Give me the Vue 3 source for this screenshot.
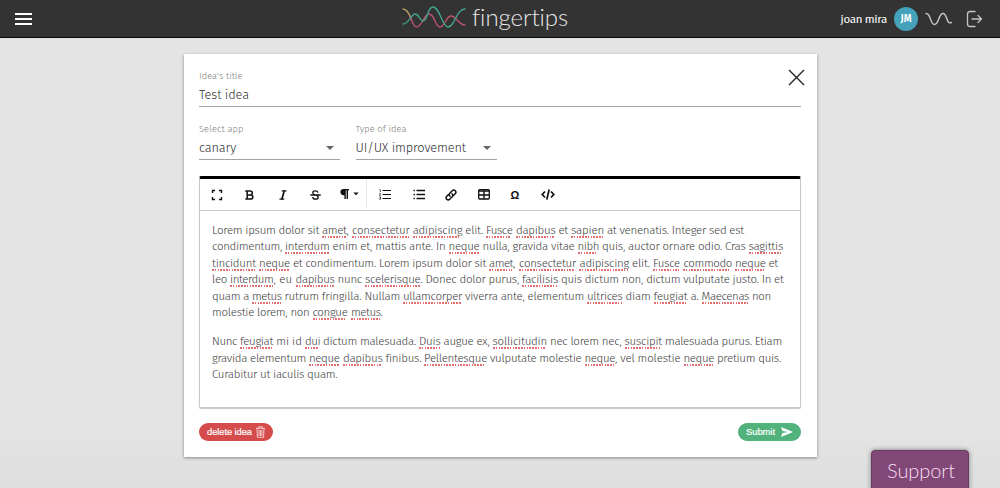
<script setup>
// Sets letter spacing so that a label fills the given width.
const fit = (el, { value }) => {
  el.style.letterSpacing = '0px'
  const range = document.createRange()
  range.selectNodeContents(el)
  const natural = range.getBoundingClientRect().width
  el.style.letterSpacing = (value - natural) / el.textContent.length + 'px'
}
const vFit = { mounted: fit }

// Segments alternate between plain text and words flagged by the spell checker.
const line = (text, stops) =>
  text
    .split('|')
    .map((t, i) => ({ text: t, flagged: i % 2 === 1, width: stops[i + 1] - stops[i] }))
    .filter((s) => s.text)

const paragraphs = [
  [
    line('Lorem ipsum dolor sit |amet|, |consectetur| |adipiscing| elit. |Fusce| |dapibus| et |sapien| at venenatis. Integer sed est',
      [212, 322, 346.5, 352, 409.5, 412.7, 462.3, 486, 512.5, 516, 555.5, 571, 604, 744]),
    line('condimentum, |interdum| enim et, mattis ante. In |neque| nulla, gravida vitae |nibh| quis, auctor ornare odio. Cras |sagittis',
      [212, 285, 329.5, 448.5, 479.5, 577.5, 599, 748.5, 783]),
    line('|tincidunt| |neque| et condimentum. Lorem ipsum dolor sit |amet|, |consectetur| |adipiscing| elit. |Fusce| |commodo| |neque| et',
      [212, 212, 255.8, 259, 290, 489, 513, 519, 576, 579.5, 629, 653, 680, 683.5, 732, 735, 765.5, 778]),
    line('leo |interdum|, eu |dapibus| nunc |scelerisque|. Donec dolor purus, |facilisis| quis dictum non, dictum vulputate justo. In et',
      [212, 230, 273.5, 295.5, 334.5, 365, 420.5, 522, 558, 783.7]),
    line('quam a |metus| rutrum fringilla. Nullam |ullamcorper| viverra ante, elementum |ultrices| diam |feugiat| a. |Maecenas| non',
      [212, 252, 281.5, 403, 462, 587, 622.5, 653.5, 687.5, 701.5, 749, 771]),
    line('molestie lorem, non |congue| |metus|.', [212, 312.5, 347.5, 351, 380.5, 383.5])
  ],
  [
    line('Nunc |feugiat| mi id |dui| dictum malesuada. |Duis| augue ex, |sollicitudin| nec lorem nec, |suscipit| malesuada purus. Etiam',
      [212, 240, 273, 305, 320, 419, 440.5, 492.5, 547, 624.5, 662, 782]),
    line('gravida elementum |neque| |dapibus| finibus. |Pellentesque| vulputate molestie |neque|, vel molestie |neque| pretium quis.',
      [212, 309, 339.5, 343, 382.5, 424, 487, 584.5, 615, 683.5, 714, 781]),
    line('Curabitur ut iaculis quam.', [212, 337.500])
  ]
]
</script>

<template>
  <div class="page">
    <header>
      <div class="menu"><i></i><i></i><i></i></div>
      <div class="brand">
        <svg width="64" height="24" viewBox="0 0 64 24" fill="none" stroke-width="1.3" stroke-linecap="round">
          <path stroke="#b9a25c" d="M1 4C5 4 7 8 9 14" />
          <path stroke="#c05573" d="M8 11C10 17 12 22 14.500 22C20 22 22 9 27 9C33 9 33 22 38 22C43 22 44 11 49 11C54 11 57 20 63 20" />
          <path stroke="#45a592" d="M1 19C7 19 9 9 13 9C17 9 18 16 21 16C26 16 25 2 31 2C38 2 40 22 46 22C53 22 54 4 63 4" />
        </svg>
        <span v-fit="96" class="name">fingertips</span>
      </div>
      <div class="user">
        <span v-fit="46.500" class="who">joan mira</span>
        <span class="avatar">JM</span>
        <svg class="wave" width="28" height="14" viewBox="0 0 28 14" fill="none" stroke="#c8c8c8" stroke-width="1.400" stroke-linecap="round"><path d="M1 1.500C6 1 5 12.500 9.500 12.500S13.500 1.500 18 1.500 21 13 26.500 10.500" /></svg>
        <svg width="17" height="18" viewBox="0 0 17 18" fill="none" stroke="#c4c4c4" stroke-width="1.300" stroke-linecap="round" stroke-linejoin="round"><path d="M9 1.500H4Q1.500 1.500 1.500 4V14Q1.500 16.500 4 16.500H9M6 9H15.500M12 5.500L15.500 9 12 12.500" /></svg>
      </div>
    </header>

    <main>
      <svg class="close" width="17" height="17" viewBox="0 0 17 17" stroke="#222" stroke-width="1.400"><path d="M1 1L16 16M16 1L1 16" /></svg>
      <div class="field title">
        <label><span v-fit="43.500">Idea's title</span></label>
        <div class="value"><span v-fit="50">Test idea</span></div>
      </div>
      <div class="selects">
        <div class="field">
          <label><span v-fit="44.500">Select app</span></label>
          <div class="value"><span v-fit="37">canary</span><b class="caret"></b></div>
        </div>
        <div class="field">
          <label><span v-fit="51">Type of idea</span></label>
          <div class="value"><span v-fit="110.500">UI/UX improvement</span><b class="caret"></b></div>
        </div>
      </div>

      <section class="editor">
        <div class="toolbar">
          <span><svg width="12" height="12" viewBox="0 0 12 12" fill="none" stroke="#111" stroke-width="1.400"><path d="M1.500 4V1.500H4M8 1.500H10.500V4M10.500 8V10.500H8M4 10.500H1.500V8" /></svg></span>
          <span><svg width="9" height="10" viewBox="0 0 9 10" fill="none" stroke="#111" stroke-width="1.500"><path d="M.3.900H5Q7.300.9 7.300 2.900T5 4.900H2.200M5 4.900Q7.900 4.900 7.900 7T5 9.100H.3M2.200.9V9.100" /></svg></span>
          <span><svg width="8" height="10" viewBox="0 0 8 10" fill="none" stroke="#111"><path stroke-width="1.200" d="M2.800.8H7.500M.5 9.200H5.200" /><path stroke-width="1.700" d="M5.300.8L2.800 9.200" /></svg></span>
          <span><svg width="11" height="10" viewBox="0 0 11 10" fill="none" stroke="#111" stroke-width="1.300"><path d="M.3 5H10.700M8 2.600Q7.600.8 5.400.8 2.800.8 2.800 2.700 2.800 4.200 5.400 4.900 8.200 5.600 8.200 7.200 8.200 9.200 5.500 9.200 2.900 9.200 2.600 7.200" /></svg></span>
          <span class="para">
            <svg width="9" height="10" viewBox="0 0 9 10" fill="#111"><path d="M4 0H9V1.200H8V10H6.600V1.200H5.800V10H4.400V6.200H3.500A3.100 3.100 0 0 1 3.500 0Z" /></svg>
            <svg width="6" height="4" viewBox="0 0 6 4" fill="#111"><path d="M.3.500H5.700L3 3.300Z" /></svg>
          </span>
          <span><svg width="12" height="11" viewBox="0 0 12 11" stroke="#111" fill="none"><path stroke-width="1.200" d="M3.500 1.500H12M3.500 5.500H12M3.500 9.500H12" /><path stroke-width=".7" d="M.4.800H1.300V3M.3 4.500H1.500L.5 6.500H1.700M.3 8H1.500V10.300H.3M.6 9.200H1.500" /></svg></span>
          <span><svg width="12" height="11" viewBox="0 0 12 11" stroke="#111" stroke-width="1.300"><path d="M3.500 1.500H12M3.500 5.500H12M3.500 9.500H12M.5 1.500H1.900M.5 5.500H1.900M.5 9.500H1.900" /></svg></span>
          <span><svg width="12" height="12" viewBox="0 0 24 24" fill="none" stroke="#111" stroke-width="3" stroke-linecap="round"><path d="M10 14.500C8 12.500 8 10 10 8L14 4C16 2 19 2 20.500 3.500S22 8 20 10L17.500 12.500M14 9.500C16 11.500 16 14 14 16L10 20C8 22 5 22 3.500 20.500S2 16 4 14L6.500 11.500" /></svg></span>
          <span><svg width="12" height="11" viewBox="0 0 12 11"><rect x=".7" y=".7" width="10.600" height="9.300" rx="1" fill="none" stroke="#111" stroke-width="1.300" /><path d="M.7 2H11.300M.7 6H11.300M6 2V10" stroke="#111" stroke-width="1.400" /></svg></span>
          <span class="omega">Ω</span>
          <span><svg width="14" height="11" viewBox="0 0 14 11" fill="none" stroke="#111" stroke-width="1.700"><path d="M4 2.500L1.200 5.500 4 8.500M10 2.500L12.800 5.500 10 8.500M8.200.5L5.800 10.500" /></svg></span>
        </div>
        <div class="content">
          <p v-for="(p, i) in paragraphs" :key="i">
            <span v-for="(l, j) in p" :key="j" class="line"><span
              v-for="(s, k) in l" :key="k" class="seg" :class="{ flagged: s.flagged }" :style="{ width: s.width + 'px' }"
            ><span v-fit="s.width">{{ s.text }}</span></span></span>
          </p>
        </div>
      </section>

      <div class="actions">
        <button class="delete"><span v-fit="45">delete idea</span>
          <svg width="9" height="12" viewBox="0 0 9 12" fill="none" stroke="#f7dada" stroke-width=".9"><path d="M0 2.300H9M2.800 2.300V.8H6.200V2.300M1 2.500L1.400 11.300H7.600L8 2.500M3 4V10M4.500 4V10M6 4V10" /></svg>
        </button>
        <button class="submit"><span v-fit="29">Submit</span>
          <svg width="12" height="10" viewBox="0 0 12 10" fill="#fff"><path d="M0 0L12 5 0 10 1.500 6 7 5 1.500 4Z" /></svg>
        </button>
      </div>
    </main>
    <div class="support"><span v-fit="68">Support</span></div>
  </div>
</template>

<style>
body { margin: 0; overflow: hidden; }
</style>

<style scoped>
.page { position: relative; height: 488px; overflow: hidden; background: linear-gradient(#e4e4e4 88%, #dedede); font-family: "Fira Sans", "Open Sans", "Noto Sans", sans-serif; font-weight: 300; color: #3c3c3c; }
header { box-sizing: border-box; height: 38px; background: #333; border-bottom: 1px solid #0c0c0c; display: grid; grid-template-columns: 387px auto 1fr; align-items: center; padding: 0 17px 0 15px; }
.menu { display: flex; flex-direction: column; gap: 3px; width: 17px; }
.menu i { height: 2px; background: #fff; }
.brand { display: flex; align-items: center; gap: 6px; height: 37px; }
.brand svg { margin-top: -4px; }
.name { font: 300 24px/30px Lato, sans-serif; color: #e8e8e8; white-space: nowrap; width: 96px; margin-top: -3px; }
.user { display: flex; align-items: center; justify-content: flex-end; height: 37px; }
.who { font-size: 11.5px; font-weight: 400; color: #fff; white-space: nowrap; width: 46.5px; }
.avatar { width: 24px; height: 24px; border-radius: 50%; background: #46a1bb; color: #fff; font-size: 10px; font-weight: 600; line-height: 24px; text-align: center; margin: 0 7px; }
.wave { margin-right: 13px; }
main { position: relative; box-sizing: border-box; width: 633px; height: 403px; margin: 16px 0 0 183.5px; padding: 15px 15.5px 0; background: #fff; box-shadow: 0 1px 3px rgba(0, 0, 0, .4); }
.close { position: absolute; right: 11.5px; top: 15px; }
label { display: block; height: 14px; font-size: 9.4px; line-height: 14.5px; color: #808080; }
.value { display: flex; align-items: center; justify-content: space-between; height: 23px; font-size: 12.8px; line-height: 22px; color: #303030; border-bottom: 1px solid #a5a5a5; white-space: nowrap; }
.selects { display: grid; grid-template-columns: 141px 141px; gap: 15.5px; margin-top: 15px; }
.caret { width: 0; height: 0; border: 4px solid transparent; border-top-color: #666; border-bottom: 0; margin-right: 6px; }
.editor { box-sizing: border-box; height: 232px; width: 602px; margin-top: 16px; border: 1px solid #c8c8c8; border-top: 3px solid #000; border-radius: 2px; box-shadow: 0 1px 1px rgba(0, 0, 0, .22); }
.toolbar { height: 31px; display: grid; grid-template-columns: 33px 33px 33px 33px 34.5px 36px 32px 33px 33px 29px 36px; border-bottom: 1px solid #c8c8c8; }
.toolbar > span { display: flex; align-items: center; justify-content: center; }
.toolbar .para { gap: 4px; padding-left: 2px; border-right: 1px solid #e5e5e5; margin-bottom: 2px; }
.toolbar .omega { font: 700 11px/14px "Liberation Sans", sans-serif; color: #111; }
.content { padding: 11px 0 0 12px; font-size: 11.5px; }
p { margin: 0 0 12.5px; }
.line { display: flex; height: 16.45px; line-height: 16.45px; }
.seg { display: block; position: relative; flex: none; white-space: pre; }
.flagged::after { content: ""; position: absolute; left: 0; right: 1px; bottom: .5px; height: 2px; background: repeating-linear-gradient(90deg, #dd4b50 0 1.6px, transparent 1.6px 2.8px); opacity: .8; }
.actions { display: flex; justify-content: space-between; margin-top: 15px; }
button { display: flex; align-items: center; justify-content: space-between; height: 18px; border: 0; border-radius: 9px; color: #fff; font: 400 9.3px/18px "Liberation Sans", Arial, sans-serif; -webkit-text-stroke: .2px #fff; white-space: nowrap; }
.delete { width: 74px; padding: 0 8px; background: #d64b4b; }
.submit { width: 63px; padding: 0 8px; background: #51b27b; }
.support { position: absolute; box-sizing: border-box; left: 871px; top: 450px; width: 98px; height: 42px; padding-left: 15px; border: 1px solid #6a3964; border-radius: 4px 4px 0 0; background: #814776; color: #f6dff3; font: 300 20px/39px Lato, sans-serif; box-shadow: 0 0 5px rgba(0, 0, 0, .45); }
</style>
